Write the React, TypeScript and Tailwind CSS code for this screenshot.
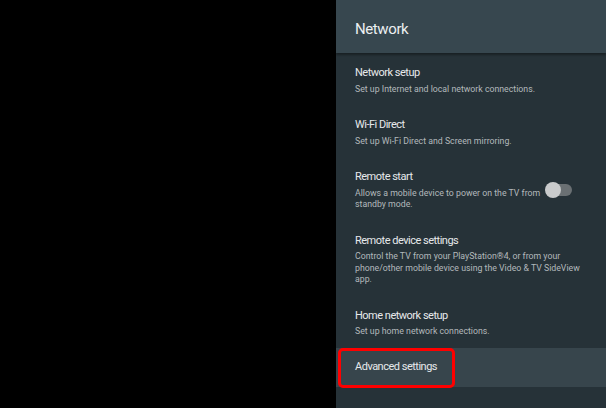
import React from "react";

type Item = {
  title: string;
  desc?: string;
  toggle?: boolean;
};

const items: Item[] = [
  { title: "Network setup", desc: "Set up Internet and local network connections." },
  { title: "Wi-Fi Direct", desc: "Set up Wi-Fi Direct and Screen mirroring." },
  {
    title: "Remote start",
    desc: "Allows a mobile device to power on the TV from standby mode.",
    toggle: true,
  },
  {
    title: "Remote device settings",
    desc: "Control the TV from your PlayStation®4, or from your phone/other mobile device using the Video & TV SideView app.",
  },
  { title: "Home network setup", desc: "Set up home network connections." },
];

const Toggle = () => (
  <div className="relative w-[27px] h-[16px] shrink-0 flex items-center">
    <div className="ml-[8px] w-[19px] h-[12px] rounded-full bg-[#6a7073]" />
    <div className="absolute left-0 top-0 w-[16px] h-[16px] rounded-full bg-[#c9cbcc]" />
  </div>
);

export default function App() {
  return (
    <div
      className="w-[606px] h-[408px] bg-black flex overflow-hidden"
      style={{ fontFamily: "Roboto, 'Liberation Sans', sans-serif" }}
    >
      <div className="w-[336px] shrink-0" />
      <div className="flex-1 bg-[#263238] flex flex-col">
        <div className="h-[53px] bg-[#37474f] flex items-center pl-[19px] pt-[6px] shadow-[0_2px_2px_rgba(0,0,0,0.35)]">
          <h1 className="text-[15px] tracking-[-0.4px] text-[#eceff1] leading-none">Network</h1>
        </div>
        <div className="flex flex-col">
          {items.map((it) => (
            <div key={it.title} className="flex items-center pl-[19px] pt-[12px] pb-[10px]">
              <div className={it.toggle ? "w-[188px] mr-[2px]" : "w-[232px]"}>
                <div className="text-[11px] tracking-[-0.5px] leading-[16px] text-[#e6e9eb]">{it.title}</div>
                <div className="mt-[2.5px] text-[8.75px] leading-[11.5px] text-[#b3b9bc]">{it.desc}</div>
              </div>
              {it.toggle && <Toggle />}
            </div>
          ))}
          <div className="relative h-[39px] bg-[#37454c] flex items-center pl-[19px]">
            <span className="text-[11px] tracking-[-0.5px] text-[#e6e9eb]">Advanced settings</span>
            <div className="absolute left-[2px] top-0 w-[117px] h-[40px] border-[3px] border-[#ff0000] rounded-[5px]" />
          </div>
        </div>
      </div>
    </div>
  );
}
